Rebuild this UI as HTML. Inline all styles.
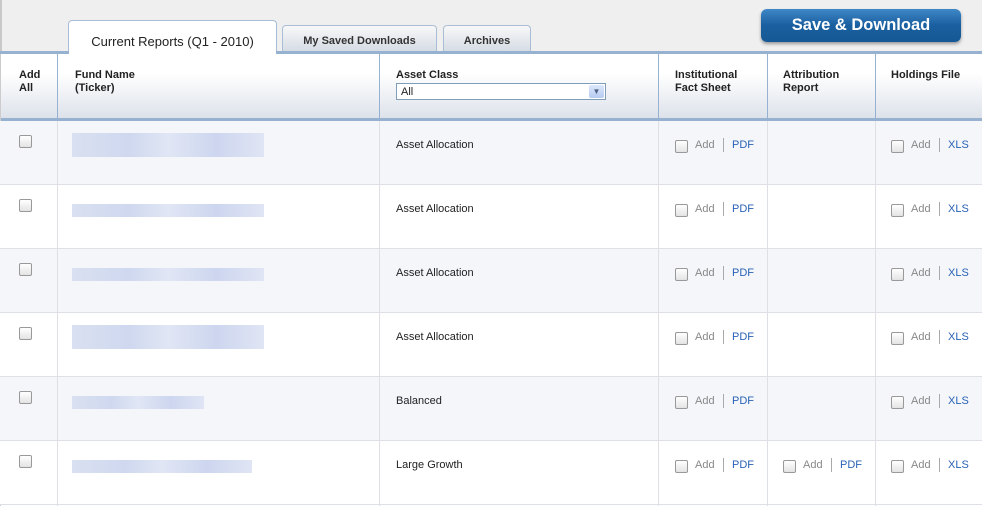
<!DOCTYPE html>
<html><head><style>
*{margin:0;padding:0;box-sizing:border-box}
body{width:982px;height:506px;overflow:hidden;background:#fff;font-family:"Liberation Sans",Arial,sans-serif;font-size:11px;color:#222;position:relative}
.top{position:absolute;left:0;top:0;width:982px;height:52px;background:#efefef;border-left:2px solid #c8c8c8}
.tab{position:absolute;border:1px solid #a9bed6;border-bottom:none;border-radius:4px 4px 0 0;background:linear-gradient(#f8f8f8,#d4dbe4);font-weight:bold;font-size:11px;color:#333;text-align:center}
.tab.act{background:#fff;font-weight:normal;font-size:13px;color:#222}
.btn{position:absolute;left:761px;top:9px;width:200px;height:33px;border-radius:6px;background:linear-gradient(#3f87c7,#1a5f9f 50%,#155895);box-shadow:0 2px 3px #999;color:#fff;font-weight:bold;font-size:16.5px;text-align:center;line-height:33px}
.hline{position:absolute;left:0;width:982px;height:3px;background:#97b1d0}
.hdr{position:absolute;left:0;top:54px;width:982px;height:64px;background:linear-gradient(#fff 30%,#dde2ea)}
.vl{position:absolute;top:54px;width:1px;height:452px;background:#dde0e5}
.vlh{position:absolute;top:54px;width:1px;height:64px;background:#97b1d0}
.ht{position:absolute;top:69px;font-weight:bold;line-height:13px}
.row{position:absolute;left:0;width:982px;height:64px;border-bottom:1px solid #dde0e5}
.cb{position:absolute;width:13px;height:13px;border:1px solid #999;border-radius:2px;background:linear-gradient(#fff,#e3e3e3)}
.t{position:absolute;line-height:13px}
.add{color:#888}.lnk{color:#2a62b5}
.sep{position:absolute;width:1px;height:14px;background:#aaa}
.blur{position:absolute;height:24px;background:linear-gradient(90deg,#d9e0f1,#cfd8ef 30%,#e0e6f4 50%,#cdd6ef 75%,#dfe5f4)}
.blur.one{height:13px}
</style></head><body>
<div class="top"></div>
<div class="tab act" style="left:68px;top:20px;width:209px;height:34px;line-height:42px">Current Reports (Q1 - 2010)</div>
<div class="tab" style="left:282px;top:25px;width:155px;height:27px;line-height:30px">My Saved Downloads</div>
<div class="tab" style="left:443px;top:25px;width:88px;height:27px;line-height:30px">Archives</div>
<div class="btn">Save &amp; Download</div>
<div class="hline" style="top:51px"></div>
<div class="hline" style="top:51px;left:69px;width:207px;background:#fff"></div>
<div class="hdr"></div>
<div class="hline" style="top:118px"></div>
<div class="vl" style="left:0;background:#ccc"></div>
<div class="vlh" style="left:57px"></div><div class="vlh" style="left:379px"></div><div class="vlh" style="left:658px"></div><div class="vlh" style="left:767px"></div><div class="vlh" style="left:875px"></div>
<div class="ht" style="left:19px">Add<br>All</div>
<div class="ht" style="left:75px">Fund Name<br>(Ticker)</div>
<div class="ht" style="left:396px">Asset Class</div>
<div style="position:absolute;left:396px;top:83px;width:210px;height:17px;border:1px solid #7f9db9;background:#fff;font-size:11px;line-height:16px;padding-left:4px">All<div style="position:absolute;right:1px;top:1px;width:15px;height:13px;border-radius:2px;background:linear-gradient(#dce7fb,#b5cbf1);color:#4d6185;font-size:8px;text-align:center;line-height:13px">▼</div></div>
<div class="ht" style="left:675px">Institutional<br>Fact Sheet</div>
<div class="ht" style="left:783px">Attribution<br>Report</div>
<div class="ht" style="left:891px">Holdings File</div>

<div class="row" style="top:121px;background:#f4f6fa"></div>
<div class="row" style="top:185px;background:#fff"></div>
<div class="row" style="top:249px;background:#f4f6fa"></div>
<div class="row" style="top:313px;background:#fff"></div>
<div class="row" style="top:377px;background:#f4f6fa"></div>
<div class="row" style="top:441px;background:#fff"></div>
<div class="vl" style="left:57px;top:121px;height:385px"></div><div class="vl" style="left:379px;top:121px;height:385px"></div><div class="vl" style="left:658px;top:121px;height:385px"></div><div class="vl" style="left:767px;top:121px;height:385px"></div><div class="vl" style="left:875px;top:121px;height:385px"></div>

<div id="rows"></div>
<script>
var d=[["Asset Allocation",0,192,0],["Asset Allocation",1,192,0],["Asset Allocation",1,192,0],["Asset Allocation",0,192,0],["Balanced",1,132,0],["Large Growth",1,180,1]];
var h='';
d.forEach(function(r,i){var y=122+i*64;
h+='<div class="cb" style="left:19px;top:'+(y+13)+'px"></div>';
h+='<div class="blur'+(r[1]?' one':'')+'" style="left:72px;top:'+(y+(r[1]?18:11))+'px;width:'+r[2]+'px"></div>';
h+='<div class="t" style="left:396px;top:'+(y+17)+'px">'+r[0]+'</div>';
function grp(x,l){return '<div class="cb" style="left:'+x+'px;top:'+(y+18)+'px"></div><div class="t add" style="left:'+(x+20)+'px;top:'+(y+17)+'px">Add</div><div class="sep" style="left:'+(x+48)+'px;top:'+(y+16)+'px"></div><div class="t lnk" style="left:'+(x+57)+'px;top:'+(y+17)+'px">'+l+'</div>';}
h+=grp(675,'PDF');if(r[3])h+=grp(783,'PDF');h+=grp(891,'XLS');});
document.getElementById('rows').innerHTML=h;
</script>
</body></html>
